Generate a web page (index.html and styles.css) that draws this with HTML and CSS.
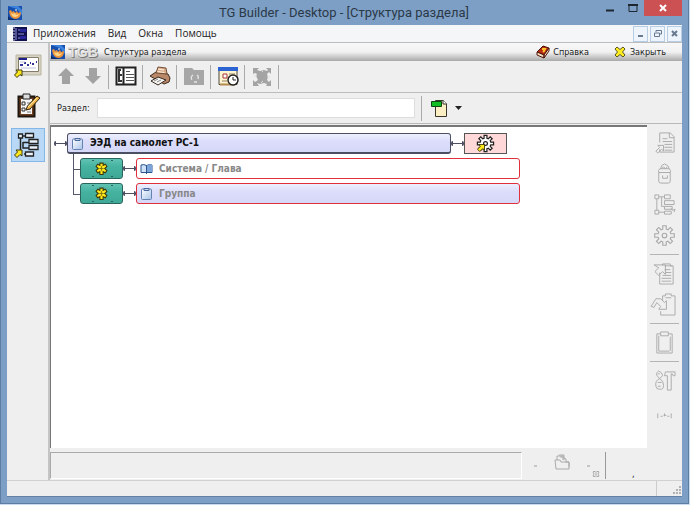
FILE: index.html
```html
<!DOCTYPE html>
<html lang="ru">
<head>
<meta charset="utf-8">
<title>TG Builder - Desktop - [Структура раздела]</title>
<link rel="stylesheet" href="styles.css">
</head>
<body>
<svg class="defs" aria-hidden="true">
  <defs>
    <linearGradient id="lgBlue" x1="0" y1="0" x2="1" y2="1"><stop offset="0" stop-color="#fff"/><stop offset="1" stop-color="#a9c4e8"/></linearGradient>
    <symbol id="logo" viewBox="0 0 14 14">
      <rect width="14" height="14" fill="#174fae"/>
      <path d="M0 0h10l4 4v5L9 3z" fill="#3c83dc"/>
      <path d="M1 5l2-1 1 2 2-1 1 2 2-2 1 2 3-1q0 6-5 7-6 0-7-8z" fill="#ee943a"/>
      <path d="M3 7l2 1 2-1 1 2 3-1q-1 3-4 3-3 0-4-4z" fill="#ffd58a"/>
      <path d="M8 3l1 1-1 1-1-1z" fill="#fff"/>
      <path d="M0 10q3 4 9 3l-1 1H0z" fill="#0b2d6e"/>
    </symbol>
    <symbol id="clip" viewBox="0 0 13 13">
      <rect x="1.500" y="2" width="10" height="10.500" rx="1" fill="url(#lgBlue)" stroke="#6482b0"/>
      <path d="M4 1.500h5v2H4z" fill="#c6d7ee" stroke="#4a6a9c"/>
    </symbol>
    <symbol id="star" viewBox="0 0 12 12">
      <path d="M4.500 1h3v2l2-1 1.500 2-2 2 2 2-1.500 2-2-1v2.500h-3V9l-2 1L1 8l2-2-2-2 1.500-2 2 1z" fill="#ffe81c" stroke="#3c3a10"/>
      <path d="M6 4v4M4 6h4" stroke="#8a7b10"/>
    </symbol>
    <symbol id="gear" viewBox="0 0 20 20">
      <path d="M8.500 1.500h3v3l1.500.5 2-2 2 2-2 2 .500 1.500h3v3h-3L15 13l2 2-2 2-2-2-1.500.500v3h-3v-3L7 15l-2 2-2-2 2-2-.500-1.500h-3v-3h3L5 7 3 5l2-2 2 2 1.500-.500z"/>
      <circle cx="10" cy="10" r="2"/>
    </symbol>
    <symbol id="arrow" viewBox="0 0 9 9">
      <path d="M2 1h6v6L6 5.500 3 8.500.500 6 3.500 3z" fill="#ffe81c" stroke="#3c3a10"/>
    </symbol>
  </defs>
</svg>

<div class="window">
  <header class="titlebar">
    <svg class="app-logo"><use href="#logo"/></svg>
    <h1>TG Builder - Desktop - [Структура раздела]</h1>
    <div class="window-controls">
      <button aria-label="Свернуть"><svg viewBox="0 0 10 10"><path d="M1 7.500h8" stroke="#1d2730" stroke-width="2"/></svg></button>
      <button aria-label="Развернуть"><svg viewBox="0 0 10 10"><path d="M1 2h8v6.500H1z" fill="none" stroke="#1d2730"/><path d="M0 2h10" stroke="#1d2730" stroke-width="2"/></svg></button>
      <button class="close" aria-label="Закрыть окно"><svg viewBox="0 0 10 10"><path d="M2 2l6 6M8 2L2 8" stroke="#fff" stroke-width="2"/></svg></button>
    </div>
  </header>

  <div class="client">
    <nav class="menubar" aria-label="Меню">
      <svg class="menu-icon" viewBox="0 0 14 14"><rect width="14" height="14" fill="#10104c"/><path d="M3 1v12M5 3h6M5 7h6M5 11h6" stroke="#9097df"/><path d="M0 1h2M0 4h2M0 7h2M0 10h2M0 13h2" stroke="#c5c8ef"/><path d="M7 2h6v3H7zM7 9h6v3H7z" fill="#27279a"/></svg>
      <button>Приложения</button>
      <button>Вид</button>
      <button>Окна</button>
      <button>Помощь</button>
      <div class="mdi-controls">
        <button aria-label="Свернуть документ"><svg viewBox="0 0 9 9"><path d="M2 7h5" stroke="#697990" stroke-width="2"/></svg></button>
        <button aria-label="Восстановить документ"><svg viewBox="0 0 9 9"><path d="M3 3V1.500h5.500v3.500H7M1.500 4h5v3.500h-5z" fill="none" stroke="#697990"/></svg></button>
        <button aria-label="Закрыть документ"><svg viewBox="0 0 9 9"><path d="M2 2l5 5M7 2L2 7" stroke="#697990" stroke-width="2"/></svg></button>
      </div>
    </nav>

    <div class="workspace">
      <nav class="apps" aria-label="Приложения">
        <button aria-label="Рабочий стол"><svg viewBox="0 0 28 28"><path d="M2 4h25v20H2z" fill="#d8d3c2" stroke="#b9b4a3"/><path d="M4.500 6.500h20v14h-20z" fill="#fff" stroke="#827d6b"/><path d="M5 7h8v2H5z" fill="#20208d"/><path d="M6 14h3M10 12h2M13 14h2M16 12h1M18 13h2M22 11h1" stroke="#333397" stroke-width="2"/><path d="M7 17h15M6 11h5" stroke="#c2c4df"/><use href="#arrow" x="0" y="18" width="9" height="9"/></svg></button>
        <button aria-label="Задания"><svg viewBox="0 0 28 28"><path d="M4.500 5.500h16v20h-16z" fill="#6b3f1d" stroke="#1d1510" stroke-width="2"/><path d="M7 8h11v15H7z" fill="#f4f4f4"/><path d="M9 3h7v5H9z" fill="#ddd" stroke="#222"/><path d="M8 11h3v3H8zM8 17h3v3H8z" fill="none" stroke="#333"/><path d="M13 12h5M13 18h4M13 21h4" stroke="#777"/><path d="M12 19l1.500-4L23 5l3 2-10 11z" fill="#eeb64c" stroke="#35230e"/><path d="M14 16L23 7" stroke="#ffe8a0"/></svg></button>
        <button class="active" aria-label="Структура раздела" aria-current="page"><svg viewBox="0 0 28 28"><path d="M6.500 5v14M6.500 5H12M9 11.500h6M9 11v6h6M12 23h-2" fill="none" stroke="#222" stroke-width="1.500"/><g fill="#e9f2fb" stroke="#222" stroke-width="1.300"><path d="M4.500 3h4v4h-4zM11.500 2.500h8v4h-8zM15 8.500h9v4h-9zM15 14.500h9v4h-9zM11.500 21h8v4h-8z"/></g><use href="#arrow" x="0" y="18" width="9" height="9"/></svg></button>
      </nav>

      <main class="document">
        <header class="doc-header">
          <svg class="doc-logo"><use href="#logo"/></svg>
          <span class="brand">TGB</span>
          <h2>Структура раздела</h2>
          <div class="doc-actions">
            <button><svg viewBox="0 0 14 14"><path d="M1 7l6-6 6 2-5 7z" fill="#b52b16" stroke="#501108"/><path d="M1 7v3l7 3v-3zM8 10v3l5-7V3z" fill="#f5e0c0" stroke="#501108"/><path d="M6 4l3 0-1 2-1 1" fill="none" stroke="#ffc62c" stroke-width="2"/></svg>Справка</button>
            <button><svg viewBox="0 0 14 14"><path d="M2 4l2-2 3 2.500L10 2l2 2-2.500 3L12 10l-2 2-3-2.500L4 12l-2-2 2.500-3z" fill="#ffed23" stroke="#5b571a"/></svg>Закрыть</button>
          </div>
        </header>

        <div class="toolbar" role="toolbar" aria-label="Инструменты">
          <div class="tool-group">
            <button aria-label="Вверх"><svg viewBox="0 0 24 24"><path d="M12 3l8 8h-4v8H8v-8H4z" fill="#a2a2a2"/></svg></button>
            <button aria-label="Вниз"><svg viewBox="0 0 24 24"><path d="M12 19l8-8h-4V3H8v8H4z" fill="#a2a2a2"/></svg></button>
          </div>
          <div class="tool-group"><button aria-label="Структура"><svg viewBox="0 0 24 24"><path d="M2.500 2.500h19v17h-19z" fill="#fff" stroke="#222" stroke-width="2"/><path d="M9.500 2v18" stroke="#222" stroke-width="2"/><path d="M4 5h3M5 5v11h3M5 10h3" fill="none" stroke="#333" stroke-width="2"/><path d="M12 6.500h4M12 9.500h8M12 12.500h8M12 15.500h8" stroke="#555"/></svg></button></div>
          <div class="tool-group"><button aria-label="Печать"><svg viewBox="0 0 24 24"><path d="M2 11l6-4 12 2 2 4-1 4-5 2z" fill="#b98868" stroke="#3d291c"/><path d="M8 8l2-6 8 1 1 6z" fill="#d8ac8a" stroke="#745038"/><path d="M10 4l6 1M9.500 6.500l7 1" stroke="#fff0dd"/><path d="M3 16l7-4 8 3-8 5z" fill="#f8f6f2" stroke="#33261c"/><path d="M6 16l4-2M9 17l4-2" stroke="#888"/></svg></button></div>
          <div class="tool-group"><button aria-label="Папка"><svg viewBox="0 0 24 24"><path d="M2 3h8l2 2h10v15H2z" fill="#a6a6a6"/><path d="M11 10q-3 2-1 5M15 10q2 1 1 4M12 17h3" fill="none" stroke="#e4e4e4" stroke-width="1.300"/></svg></button></div>
          <div class="tool-group"><button aria-label="Расписание"><svg viewBox="0 0 24 24"><path d="M3 3.500h18v16H3z" fill="#fff4d2" stroke="#4c443a"/><path d="M2 2h20v4H2z" fill="#2c63d3"/><path d="M4 19.500h15" stroke="#b38b4c" stroke-width="2"/><path d="M7 9h4v4H7z" fill="#fff" stroke="#a33"/><path d="M13 9h6M6 16h5" stroke="#927e60"/><circle cx="17" cy="15" r="5" fill="#fff" stroke="#222" stroke-width="1.500"/><path d="M17 12v3h3" fill="none" stroke="#222"/></svg></button></div>
          <div class="tool-group"><button aria-label="Во весь экран"><svg viewBox="0 0 24 24"><path d="M3 3h6L7 5l3 1 4-1 3 1 1-1-2-2h5v6l-2-2-2 2 1 3-1 3 2 2 2-2v6h-5l1-2-3-1-4 1-3-1 2 3H3v-6l2 2 3-2-2-4 1-2-2-1-2 1z" fill="#a4a4a4"/><path d="M4 11l3 0M17 12h3M11 5l2 2M11 18l2-2" fill="none" stroke="#ddd"/></svg></button></div>
        </div>

        <form class="filter">
          <label for="section">Раздел:</label>
          <input id="section" type="text">
          <button class="goto" type="button" aria-label="Перейти"><svg class="goto-icon" viewBox="0 0 18 20"><path d="M4.500 2.500h8l3 3v13h-11z" fill="#fbefc3" stroke="#39352a"/><path d="M12 2v4h4" fill="#fff" stroke="#39352a"/><path d="M.500 3.500h10v5H.500z" fill="#11be22" stroke="#0b4711"/></svg><svg class="caret" viewBox="0 0 7 4"><path d="M0 0h7L3.500 4z" fill="#222"/></svg></button>
        </form>

        <div class="content">
          <section class="tree" aria-label="Структура">
            <div class="row root">
              <span class="link"></span>
              <div class="node filled"><svg><use href="#clip"/></svg>ЭЭД на самолет РС-1</div>
              <span class="link"></span>
              <div class="settings"><svg viewBox="0 0 20 20"><use href="#gear" fill="#fff" stroke="#222" stroke-width="1.300"/><use href="#arrow" x="1" y="10" width="9" height="9"/></svg></div>
            </div>
            <ul>
              <li class="row">
                <div class="required"><svg><use href="#star"/></svg></div>
                <span class="link"></span>
                <div class="node pending"><svg viewBox="0 0 13 13"><path d="M1 3q3-1 5.500.500Q9 2 12 3v7.500H1z" fill="#cfe1f7" stroke="#2c548e"/><path d="M7 3.500Q9 2 12 3v7H7z" fill="#7ba4d8"/><path d="M6.500 3v9" stroke="#2c548e"/></svg>Система / Глава</div>
              </li>
              <li class="row">
                <div class="required"><svg><use href="#star"/></svg></div>
                <span class="link"></span>
                <div class="node filled pending"><svg><use href="#clip"/></svg>Группа</div>
              </li>
            </ul>
          </section>

          <aside class="side-tools" aria-label="Действия">
            <button aria-label="Открыть"><svg viewBox="0 0 24 24"><path d="M7 12V2h11l4 4v16H7v-3M17 2v5h5M10 8h5M10 11h10M12 14h8M12 17h8M12 20h8M3 21l4-4-2-2h6v6l-2-2-4 4z"/></svg></button>
            <button aria-label="Удалить"><svg viewBox="0 0 24 24"><path d="M6 11h12v9q0 2-2 2H8q-2 0-2-2zM6 11q-1-2 1-4h10q2 2 1 4M8 7q0-4 4-5 4 1 5 5M9 7l2-2 2 2 2-2M10 14v3h5v-3"/></svg></button>
            <button aria-label="Вставить узел"><svg viewBox="0 0 24 24"><path d="M2 2h4v4H2zM2 18h4v4H2zM4 6v12M6 4h6M6 20h6M12 2h6v4h-6zM12 8h10v4H12zM9 4v10h3M12 14h8v3h-8zM12 19h7v3h-7zM19 16l1 2 3-1-1 3"/></svg></button>
            <button aria-label="Параметры"><svg viewBox="0 0 20 20"><use href="#gear"/></svg></button>
            <hr>
            <button aria-label="Копировать"><svg viewBox="0 0 24 24"><path d="M7 11v12h14V4h-3V2h-8v2M12 4h8M1 3h12v10l-3-3-4 4-4-4 4-4zM12 8h6M13 11h6M10 14h9M9 17h10M9 20h10"/></svg></button>
            <button aria-label="Вставить"><svg viewBox="0 0 24 24"><path d="M10 8V3h3V1h6v2h4v20H8v-4M13 5h6M-2 14l5-8h5l4 4 2-2v9H6l2-3-4-4-3 5z"/></svg></button>
            <hr>
            <button aria-label="Буфер обмена"><svg viewBox="0 0 24 24"><path d="M4 3h4V1h8v2h4v20H4zM8 3v2h8V3M6 5v16h11l1-1V6"/></svg></button>
            <hr>
            <button aria-label="Сервис"><svg viewBox="0 0 24 24"><path d="M6 2q-4 3-1 6l2 2q-5 2-4 8 1 4 4 3 4 1 4-4 0-5-4-7l3-3q0-3-4-5zM5 5h2M5 14h4M5 18h3M13 3h10v4h-2l-1-2h-1v17h-4V7h-3z"/></svg></button>
            <button aria-label="Измерение"><svg viewBox="0 0 24 24"><path d="M5 14v5M19 14v5M8 17h2M11 16h3M12 14v3M15 17h2"/></svg></button>
          </aside>
        </div>

        <footer class="doc-footer">
          <output class="message"></output>
          <div class="footer-tools">
            <span class="mark"></span>
            <button aria-label="Архив"><svg viewBox="0 0 18 18"><path d="M2 7h5l1 2h8v7H3zM13 9V6l-2-1M4 7V3h6v4M6 2h5v5M7 4h4M13 9l3 0v5"/></svg></button>
            <span class="mark"></span>
            <svg class="small-icon" viewBox="0 0 8 8"><path d="M2 1l1 1h2l1-1 1 1-1 2 1 2-1 1-1-1H3L2 7 1 6l1-2-1-2zM3 4h2"/></svg>
          </div>
          <div class="hint">,</div>
        </footer>
      </main>
    </div>

    <footer class="statusbar">
      <div class="grip"><svg viewBox="0 0 9 9"><path d="M7 1h2M7 4h2M7 7h2M4 4h2M4 7h2M1 7h2" stroke="#b1b1b1" stroke-width="2"/></svg></div>
    </footer>
  </div>
</div>
</body>
</html>
```

FILE: styles.css
```css
* { box-sizing: border-box; }

body {
  margin: 0;
  height: 100vh;
  padding: 0 1px 1px 0;
  background: #c9dcf0;
  color: #222;
  font: 9px/16px "DejaVu Sans Condensed", "DejaVu Sans", sans-serif;
}

button {
  display: flex;
  align-items: center;
  justify-content: center;
  margin: 0;
  padding: 0;
  border: 0;
  background: none;
  color: inherit;
  font: inherit;
}

h1, h2, ul { margin: 0; padding: 0; }
svg { display: block; flex: none; }
.defs { position: absolute; width: 0; height: 0; }

.window {
  display: flex;
  flex-direction: column;
  height: 100%;
  padding: 0 6px 6px;
  border: 1px solid #5d7da3;
  border-top: 0;
  background: #7d9fc6;
}

.titlebar { display: flex; align-items: center; height: 25px; flex: none; }
.app-logo { width: 14px; height: 14px; margin-left: 1px; }
.titlebar h1 {
  flex: 1;
  padding-left: 68px;
  color: #2b3947;
  font: 13px/24px Roboto, sans-serif;
  text-align: center;
}
.window-controls { display: flex; align-self: flex-start; }
.window-controls button { width: 23px; height: 16px; }
.window-controls svg { width: 10px; height: 10px; }
.window-controls .close { width: 38px; background: #cc5153; }

.client { display: flex; flex: 1; flex-direction: column; min-height: 0; background: #efefef; border-bottom: 1px solid #66809f; }

.menubar {
  display: flex;
  align-items: center;
  gap: 12px;
  height: 18px;
  flex: none;
  padding-left: 6px;
  border-bottom: 1px solid #bcbcbc;
  background: #f5f6f8;
  font: 10px/17px "Open Sans", sans-serif;
}
.menu-icon { width: 14px; height: 14px; margin-right: -6px; }
.mdi-controls { display: flex; gap: 2px; margin-left: auto; }
.mdi-controls button { width: 15px; height: 16px; border: 1px solid #b7cde6; background: #edf4fc; }
.mdi-controls svg { width: 9px; height: 9px; }

.workspace { display: flex; flex: 1; min-height: 0; }

.apps { display: flex; flex-direction: column; align-items: center; gap: 6px; width: 41px; flex: none; padding-top: 5px; }
.apps button { width: 34px; height: 34px; border: 1px solid transparent; }
.apps svg { width: 28px; height: 28px; }
.apps .active { border-color: #83b7ea; background: #b9d8f6; }

.document { display: flex; flex: 1; flex-direction: column; min-width: 0; border-left: 2px solid #c4c4c4; }

.doc-header {
  display: flex;
  align-items: center;
  height: 18px;
  flex: none;
  padding-right: 16px;
  background: linear-gradient(#f8f8f8, #f1f1f1 50%, #a9a9a9);
}
.doc-logo { width: 14px; height: 14px; margin-left: 1px; }
.brand {
  width: 34px;
  margin: 0 4px 0 1px;
  color: #e2e2e2;
  font: bold 14px/18px "Liberation Sans", sans-serif;
  text-align: center;
  text-shadow: 1px 1px 0 #777, 0 1px 0 #999;
}
.doc-header h2 { font-size: 9px; font-weight: normal; }
.doc-actions { display: flex; gap: 24px; margin-left: auto; }
.doc-actions button { gap: 3px; }
.doc-actions svg { width: 14px; height: 14px; }

.toolbar { display: flex; align-items: center; height: 32px; flex: none; padding-left: 1px; border-bottom: 1px solid #bdbdbd; }
.tool-group { display: flex; align-items: center; justify-content: center; width: 34px; height: 24px; border-right: 1px solid #a9a9a9; }
.tool-group:first-child { width: 58px; }
.tool-group button { width: 27px; }
.tool-group svg { width: 24px; height: 24px; }

.filter { display: flex; align-items: center; gap: 6px; height: 31px; flex: none; padding-left: 7px; border-bottom: 1px solid #b9b9b9; }
.filter label { width: 34px; flex: none; }
.filter input { flex: 0 1 318px; min-width: 0; height: 20px; padding: 0 4px; border: 1px solid #ddd; background: #fff; font: inherit; }
.goto { gap: 6px; height: 25px; padding-left: 9px; border-left: 1px solid #a9a9a9; }
.goto-icon { width: 18px; height: 20px; }
.caret { width: 7px; height: 4px; }

.content { display: flex; flex: 1; min-height: 0; margin-top: 1px; }
.tree {
  flex: 1;
  min-width: 0;
  padding: 6px 4px 0 3px;
  border: solid #777;
  border-width: 2px 0 0 1px;
  background: #fff;
  font: bold 10px/16px "DejaVu Sans Condensed", "DejaVu Sans", sans-serif;
}
.tree ul { margin-left: 26px; list-style: none; }
.row { display: flex; align-items: center; position: relative; margin-bottom: 4px; }
.node {
  display: flex;
  align-items: center;
  gap: 6px;
  flex: 0 1 384px;
  min-width: 0;
  height: 21px;
  padding-left: 3px;
  border: 1px solid #4c4f64;
  border-radius: 3px;
  background: #fff;
  color: #111;
}
.node svg { width: 13px; height: 13px; }
.filled { background: linear-gradient(#edf0ff, #dcddfb 40%, #d6d8f8); }
.root .node { border-bottom-width: 2px; }
.pending { border-color: #e0303c; color: #888; }
.link {
  width: 13px;
  height: 5px;
  flex: none;
  background: linear-gradient(#4c4f64, #4c4f64) center / 100% 1px no-repeat;
  border: solid #4c4f64;
  border-width: 0 2px;
  border-radius: 2px;
}
.settings { display: flex; align-items: center; justify-content: center; width: 43px; height: 21px; flex: none; border: 1px solid #555; background: #ffd9d9; }
.settings svg { width: 19px; height: 19px; }
.required {
  display: flex;
  align-items: center;
  justify-content: center;
  width: 43px;
  height: 21px;
  flex: none;
  border: 1px solid #28655d;
  border-radius: 3px;
  background:
    linear-gradient(#28655d, #28655d) 11px 1px / 2px 1px no-repeat,
    linear-gradient(#28655d, #28655d) 30px 1px / 2px 1px no-repeat,
    linear-gradient(#28655d, #28655d) 11px 17px / 2px 1px no-repeat,
    linear-gradient(#28655d, #28655d) 30px 17px / 2px 1px no-repeat,
    linear-gradient(#62c3b3, #45b3a0 40%, #3fa896);
}
.required svg { width: 13px; height: 13px; }
li.row::before {
  content: "";
  position: absolute;
  left: -7px;
  top: -4px;
  width: 7px;
  height: 15px;
  border: solid #55586b;
  border-width: 0 0 1px 1px;
}
li.row + li.row::before { top: -15px; height: 26px; }

.side-tools { width: 35px; flex: none; padding-top: 2px; }
.side-tools button { width: 100%; height: 31px; }
.side-tools svg { width: 23px; height: 23px; overflow: visible; }
.side-tools svg, .footer-tools svg { fill: none; stroke: #aaa; }
.side-tools hr { margin: 3px; border: 0; border-top: 1px solid #b4b4b4; }

.doc-footer { display: flex; height: 32px; flex: none; padding: 4px 0 1px; }
.message { flex: 1; border: 1px solid #aaa; border-right-color: #fff; border-bottom-color: #fff; }
.footer-tools { display: flex; align-items: center; gap: 16px; width: 84px; flex: none; padding-left: 12px; border-right: 1px solid #999; }
.footer-tools button { margin-top: -8px; }
.footer-tools svg { width: 18px; height: 18px; }
.footer-tools .small-icon { width: 8px; height: 8px; margin: 16px 0 0 -14px; }
.mark { width: 3px; height: 2px; flex: none; background: #c6c6c6; }
.hint { width: 76px; flex: none; padding: 16px 0 0 26px; line-height: 12px; }

.statusbar { display: flex; justify-content: flex-end; height: 16px; flex: none; border-top: 1px solid #d1d1d1; }
.grip { display: flex; align-items: flex-end; justify-content: flex-end; width: 26px; padding: 0 1px 1px 0; border-left: 1px solid #ccc; }
.grip svg { width: 9px; height: 9px; }
```
